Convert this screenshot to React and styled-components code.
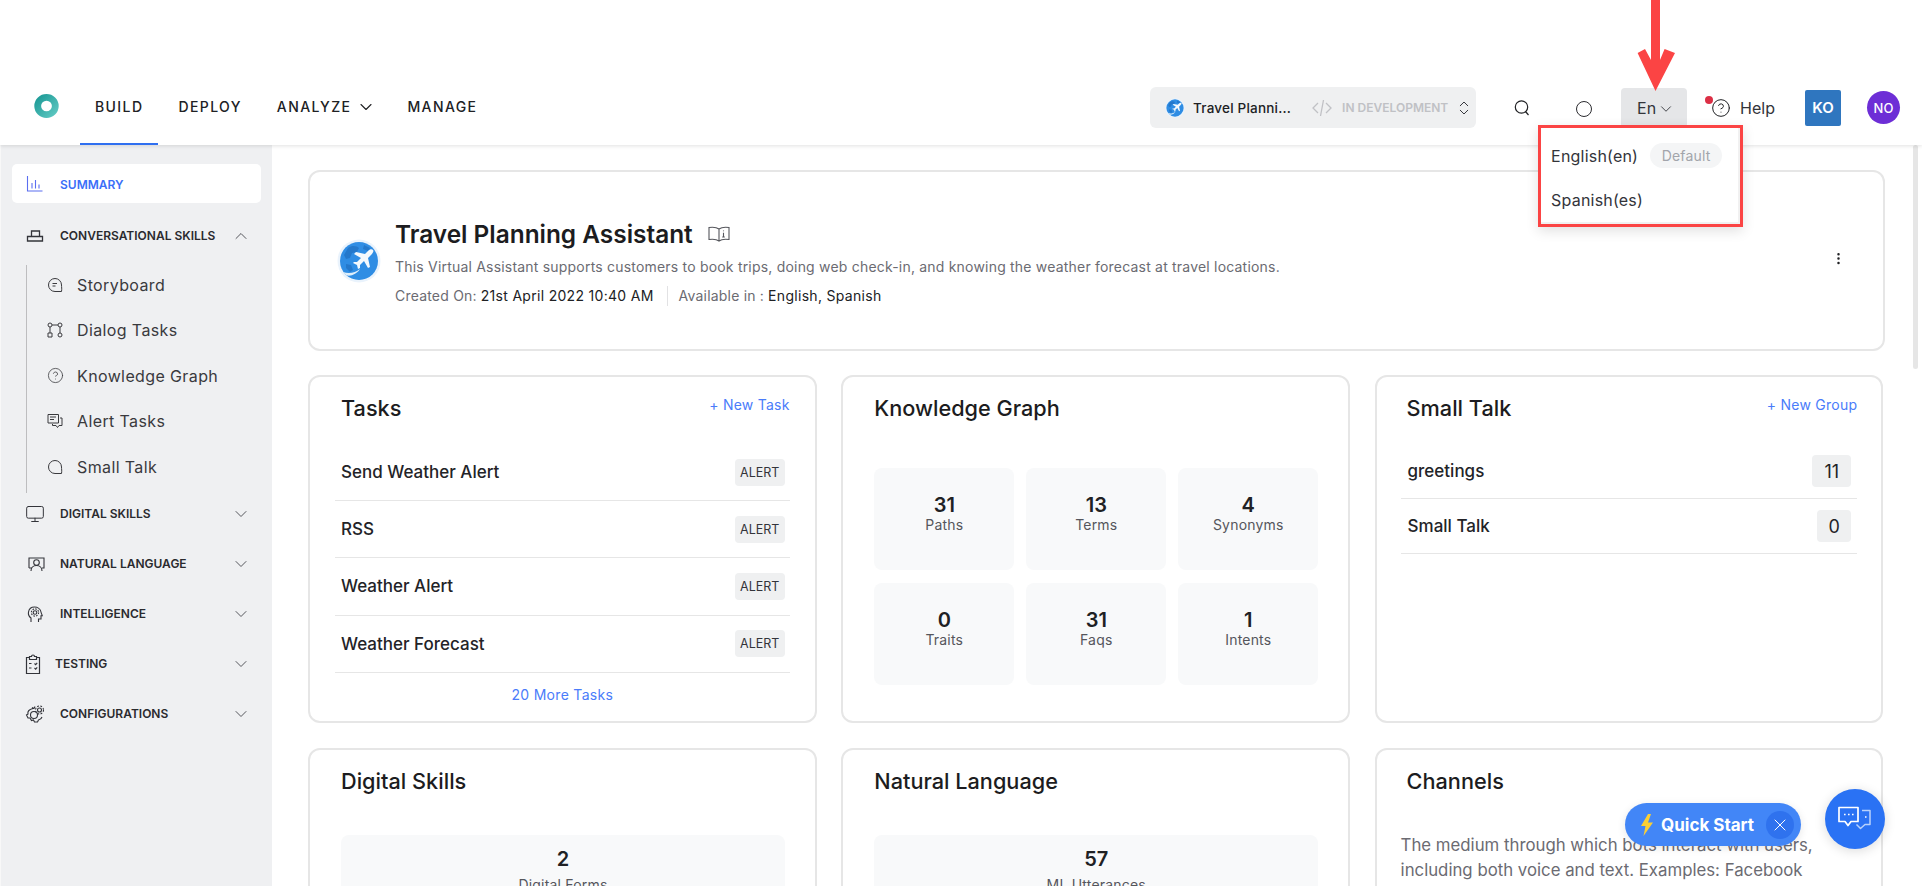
import React from 'react'
import styled, { createGlobalStyle } from 'styled-components'
import { ChevronDown, ChevronUp, ChevronsUpDown, CircleHelp, EllipsisVertical, Monitor, X } from 'lucide-react'

const GlobalStyle = createGlobalStyle`
  html, body {
    margin: 0;
    padding: 0;
    background: #fff;
    font-family: 'Inter', 'Liberation Sans', sans-serif;
    color: #202124;
  }
  * { box-sizing: border-box; }
`

const Page = styled.div`
  position: relative;
  height: 100vh;
  overflow: hidden;
  display: flex;
  flex-direction: column;
`

const Header = styled.header`
  position: relative;
  z-index: 3;
  flex: none;
  height: 145px;
  padding: 70px 22px 0 34px;
  display: flex;
  align-items: center;
  background: #fff;
  box-shadow: 0 1px 4px rgba(0, 0, 0, 0.12);
`

const LogoWrap = styled.div`
  width: 25px;
  height: 24px;
  margin: -3px 21px 0 0;
`

const Nav = styled.nav`
  display: flex;
  height: 75px;
  gap: 5px;
`

const NavItem = styled.a`
  display: flex;
  align-items: center;
  gap: 5px;
  padding: 0 15px;
  font-size: 14px;
  font-weight: 500;
  letter-spacing: 1.4px;
  color: #202124;
  border-bottom: 2px solid ${(p) => (p.$active ? '#2f6ff0' : 'transparent')};
`

const NavChevron = styled(ChevronDown)`
  margin-right: -4px;
`

const RightGroup = styled.div`
  margin-left: auto;
  display: flex;
  align-items: center;
`

const AppPicker = styled.div`
  width: 326px;
  height: 41px;
  border-radius: 6px;
  background: #eff0f1;
  display: flex;
  align-items: center;
  padding-left: 15px;
`

const AppName = styled.span`
  margin-left: 8px;
  width: 119px;
  font-size: 13.5px;
  font-weight: 500;
  letter-spacing: 0.2px;
  color: #202124;
  white-space: nowrap;
`

const DevStatus = styled.span`
  margin-left: 10px;
  margin-right: 7px;
  font-size: 12px;
  font-weight: 600;
  color: #c0c1c5;
  white-space: nowrap;
`

const HeaderIcon = styled.span`
  display: inline-flex;
  margin-left: ${(p) => p.$ml}px;
`

const EmptyCircle = styled.span`
  display: block;
  width: 16px;
  height: 16px;
  margin: 2px 0 0 46px;
  border: 1px solid #2c2c30;
  border-radius: 50%;
`

const LangWrap = styled.div`
  position: relative;
  margin-left: 29px;
`

const LangButton = styled.div`
  width: 66px;
  height: 40px;
  border-radius: 4px;
  background: #e5e6e8;
  display: flex;
  align-items: center;
  padding-left: 16px;
  gap: 1px;
  font-size: 16px;
  color: #33343a;
`

const LangMenu = styled.div`
  position: absolute;
  top: 37px;
  left: -83px;
  width: 205px;
  height: 102px;
  border: 3px solid #fb4444;
  background: #fff;
  padding: 6px 0 0 10px;
  box-shadow: 0 4px 12px rgba(0, 0, 0, 0.12), inset -2px -2px 0 #f1f1f1;
`

const LangOption = styled.div`
  height: 44px;
  display: flex;
  align-items: center;
  font-size: 16px;
  letter-spacing: 0.2px;
  color: #33343a;
`

const DefaultTag = styled.span`
  margin-left: 12px;
  width: 72px;
  height: 25px;
  border-radius: 13px;
  background: #f4f5f6;
  color: #a2a5ab;
  font-size: 14px;
  display: flex;
  align-items: center;
  justify-content: center;
`

const HelpWrap = styled.div`
  position: relative;
  margin-left: 24px;
  display: flex;
  align-items: center;
  gap: 9px;
  font-size: 16px;
  color: #33343a;
`

const HelpDot = styled.span`
  position: absolute;
  top: -2px;
  left: -6px;
  width: 8px;
  height: 8px;
  border-radius: 50%;
  background: #dc2f45;
`

const KoBadge = styled.div`
  margin-left: 30px;
  width: 36px;
  height: 36px;
  border-radius: 2px;
  background: #2f76bf;
  color: #fff;
  font-size: 15px;
  font-weight: 600;
  display: flex;
  align-items: center;
  justify-content: center;
`

const NoBadge = styled.div`
  margin-left: 26px;
  width: 33px;
  height: 33px;
  border-radius: 50%;
  background: #6d2ed6;
  color: #fff;
  font-size: 13px;
  font-weight: 500;
  display: flex;
  align-items: center;
  justify-content: center;
`

const ArrowMark = styled.svg`
  position: absolute;
  z-index: 5;
  top: 0;
  left: 1636px;
`

const Body = styled.div`
  flex: 1;
  min-height: 0;
  display: flex;
`

const Sidebar = styled.aside`
  flex: none;
  width: 272px;
  border-left: 1px solid #f8f8f8;
  background: #eff0f2;
  padding: 19px 11px 0 11px;
  display: flex;
  flex-direction: column;
  gap: 10px;
`

const SummaryRow = styled.div`
  height: 39px;
  margin-bottom: 2px;
  padding: 1px 0 0 13px;
  border-radius: 5px;
  background: #fff;
  display: flex;
  align-items: center;
  gap: 13px;
  font-size: 12px;
  font-weight: 600;
  color: #3b6ef8;
`

const SectionRow = styled.div`
  flex: none;
  height: 40px;
  padding: 1px 10px 0 13px;
  display: flex;
  align-items: center;
  gap: ${(p) => p.$gap || 13}px;
  font-size: 12px;
  font-weight: 600;
  color: #2a2a2e;
`

const SectionChevron = styled.span`
  display: inline-flex;
  margin-left: auto;
  color: #55565c;
`

const SubList = styled.div`
  flex: none;
  height: 228px;
  margin: 0 0 -10px 14px;
  border-left: 1px solid #bdbdbf;
  & > :first-child { margin-top: -3px; }
`

const SubRow = styled.div`
  height: 45.5px;
  padding-left: 20px;
  display: flex;
  align-items: center;
  gap: 14px;
  font-size: 16px;
  letter-spacing: 0.38px;
  color: #3a3a3e;
`

const Main = styled.main`
  position: relative;
  flex: 1;
  min-width: 0;
  overflow: hidden;
  padding: 25px 37px 0 36px;
`

const ScrollThumb = styled.div`
  position: absolute;
  top: 0;
  right: 4px;
  width: 5px;
  height: 224px;
  border-radius: 3px;
  background: #e6e6e6;
`

const HeroCard = styled.section`
  height: 181px;
  margin-bottom: 24px;
  border: 2px solid #e6e6e6;
  border-radius: 12px;
  padding: 0 37px 0 27px;
  display: flex;
  align-items: center;
`

const HeroText = styled.div`
  margin-left: 14px;
  margin-top: 5px;
`

const HeroTitle = styled.h1`
  margin: 0;
  display: flex;
  align-items: center;
  gap: 15px;
  font-size: 24.4px;
  line-height: 28px;
  font-weight: 600;
  color: #1c1c20;
`

const HeroDesc = styled.p`
  margin: 9px 0 0;
  font-size: 14px;
  line-height: 20px;
  letter-spacing: 0.2px;
  color: #6b6b72;
`

const HeroMeta = styled.div`
  margin-top: 9px;
  display: flex;
  align-items: center;
  font-size: 14px;
  line-height: 20px;
  letter-spacing: 0.2px;
  color: #6b6b72;
`

const Strong = styled.span`
  color: #202124;
  margin-left: 4px;
  letter-spacing: 0.3px;
`

const MetaDivider = styled.span`
  width: 1px;
  height: 20px;
  margin: 0 11px 0 13px;
  background: #e2e2e4;
`

const HeroMenu = styled.span`
  margin-left: auto;
  margin-top: -4px;
  display: inline-flex;
  color: #202124;
`

const CardGrid = styled.div`
  display: grid;
  grid-template-columns: repeat(3, 508.7px);
  gap: 25px 24.6px;
`

const Card = styled.section`
  height: 348px;
  border: 2px solid #e6e6e6;
  border-radius: 12px;
  padding: 0 ${(p) => p.$pad}px;
  display: flex;
  flex-direction: column;
`

const CardHead = styled.div`
  flex: none;
  height: 67px;
  padding: 18px 0 0 ${(p) => p.$inset || 0}px;
  display: flex;
  justify-content: space-between;
  align-items: flex-start;
`

const CardTitle = styled.h2`
  margin: 0;
  font-size: 21.7px;
  line-height: 26px;
  font-weight: 500;
  color: #1c1c20;
`

const CardLink = styled.a`
  font-size: 14px;
  line-height: 20px;
  letter-spacing: 0.25px;
  color: #4a7cfa;
`

const ListRow = styled.div`
  flex: none;
  height: ${(p) => p.$h}px;
  padding: 0 ${(p) => p.$endPad}px 0 ${(p) => p.$inset}px;
  border-bottom: 1px solid #e6e6e6;
  display: flex;
  align-items: center;
  justify-content: space-between;
  font-size: 17px;
  font-weight: 500;
  color: #232327;
`

const AlertTag = styled.span`
  width: 50px;
  height: 27px;
  border-radius: 4px;
  background: #eff0f1;
  font-size: 12.5px;
  font-weight: 400;
  color: #33343a;
  display: flex;
  align-items: center;
  justify-content: center;
`

const CountTag = styled.span`
  width: ${(p) => p.$w}px;
  height: 32px;
  border-radius: 4px;
  background: #eff0f1;
  font-size: 18px;
  font-weight: 400;
  display: flex;
  align-items: center;
  justify-content: center;
`

const MoreLink = styled.a`
  flex: 1;
  display: flex;
  align-items: center;
  justify-content: center;
  padding-bottom: 4px;
  font-size: 14px;
  letter-spacing: 0.3px;
  color: #4a7cfa;
`

const TileGrid = styled.div`
  margin-top: ${(p) => p.$top}px;
  display: grid;
  grid-template-columns: repeat(${(p) => p.$cols}, 1fr);
  gap: 13px 12px;
  width: ${(p) => p.$width}px;
  margin-left: ${(p) => p.$left || 0}px;
`

const Tile = styled.div`
  height: 102px;
  border-radius: 8px;
  background: #f8f9fa;
  padding-top: ${(p) => p.$top}px;
  text-align: center;
`

const TileNumber = styled.div`
  font-size: 20px;
  line-height: 24px;
  font-weight: 600;
  color: #202124;
`

const TileLabel = styled.div`
  margin-top: ${(p) => p.$gap}px;
  font-size: 14px;
  line-height: 18px;
  letter-spacing: 0.2px;
  color: #55565c;
`

const ChannelsText = styled.p`
  margin: 16px 0 0;
  font-size: 16.8px;
  line-height: 25px;
  color: #6b6b72;
`

const QuickStart = styled.div`
  position: absolute;
  z-index: 4;
  left: 1625px;
  top: 803px;
  width: 176px;
  height: 43px;
  border-radius: 22px;
  background: #4286f7;
  box-shadow: 0 2px 8px rgba(0, 0, 0, 0.1);
  padding-left: 15px;
  display: flex;
  align-items: center;
  gap: 7px;
  color: #fff;
  font-size: 17px;
  font-weight: 700;
`

const QuickClose = styled.span`
  margin-left: 5px;
  margin-top: 1px;
  width: 28px;
  height: 28px;
  border-radius: 50%;
  background: #2f72ee;
  display: flex;
  align-items: center;
  justify-content: center;
`

const ChatFab = styled.div`
  position: absolute;
  z-index: 4;
  left: 1825px;
  top: 789px;
  width: 60px;
  height: 60px;
  border-radius: 50%;
  background: #2a72f4;
  box-shadow: 0 2px 12px rgba(0, 0, 0, 0.14);
  display: flex;
  align-items: center;
  justify-content: center;
`

const Logo = () => (
  <svg width="25" height="24" viewBox="0 0 25 24">
    <defs>
      <linearGradient id="logoRing" x1="0" y1="0" x2="1" y2="1">
        <stop offset="0" stopColor="#1f9c98" />
        <stop offset="1" stopColor="#5cc6c0" />
      </linearGradient>
    </defs>
    <ellipse cx="12.5" cy="12" rx="8.8" ry="8.6" fill="none" stroke="url(#logoRing)" strokeWidth="6.8" />
  </svg>
)

const Globe = ({ size }) => (
  <svg width={size} height={size} viewBox="0 0 44 44">
    <circle cx="22" cy="22" r="21.5" fill="#eaf3fc" />
    <circle cx="22" cy="22" r="19" fill="#2f8de4" />
    <path d="M11 9c4-3 9-2 11 0l-2 4-5 1-2 5-4 1-2-4zM27 6l6 3-2 3-5-2zM9 25l5 1 2 5-3 2-4-4z" fill="#2478cb" />
    <path d="M6 33c6 2 12 1 17-3-3 5-10 8-14 6z" fill="#dfeefa" />
    <path d="M36 11c1 1 0 3-2 5l-3 3 2 9-2 1-4-7-4 4v3l-2 1-1-4-4-2 1-1 3 0 4-4-7-4 2-2 9 2 3-3c2-2 4-2 5-1z" fill="#f4f9fd" />
  </svg>
)

const CodeIcon = () => (
  <svg width="20" height="20" viewBox="0 0 20 20" fill="none" stroke="#c0c1c5" strokeWidth="1.3">
    <path d="M6 5 1 10l5 5M14 5l5 5-5 5M11.5 2 8.5 18" />
  </svg>
)

const SearchIcon = () => (
  <svg width="16" height="16" viewBox="0 0 16 16" fill="none" stroke="#202124" strokeWidth="1.2">
    <circle cx="7.5" cy="7" r="6.2" />
    <path d="m11.5 11.5 3 3.5" />
  </svg>
)

const BookIcon = () => (
  <svg width="22" height="16" viewBox="0 0 22 16" fill="none" stroke="#55565c" strokeWidth="1.1">
    <path d="M11 3C9 1.5 5 1 1 1.5v12c4-.5 8 0 10 1.500 2-1.500 6-2 10-1.500v-12C17 1 13 1.500 11 3zM11 3v12" />
    <path d="M15.500 4.500v.8M15.500 6.800v4M14.200 11h2.600" />
  </svg>
)

const ArrowDown = () => (
  <ArrowMark width="40" height="92" viewBox="0 0 40 92">
    <path d="M15 0h9v60l4.600-11 10.400 4L19.500 91 1.600 53 9 49l6 11z" fill="#fb4444" />
  </ArrowMark>
)

const Bolt = () => (
  <svg width="14" height="22" viewBox="0 0 14 22">
    <path d="M8 0 1 12h4.500L3.500 22 13 8.500H8L11 0z" fill="#fbcf33" />
  </svg>
)

const ChatIcon = () => (
  <svg width="34" height="28" viewBox="0 0 34 28" fill="none" strokeLinejoin="round">
    <path d="M1 2.500h19v14h-7l-3 4-3-4H1z" stroke="#fff" strokeWidth="1.700" />
    <path d="M6 9.500h1.600M10 9.500h1.600M14 9.500h1.600" stroke="#fff" strokeWidth="1.700" />
    <path d="M24 5.500h8v14h-5l-4.500 4-4-4" stroke="#b9d2fb" strokeWidth="1.500" />
    <path d="M27 12h1.500" stroke="#fff" strokeWidth="1.700" />
  </svg>
)

const SlotIcon = ({ children, stroke = '#33343a' }) => (
  <svg width="22" height="22" viewBox="0 0 22 22" fill="none" stroke={stroke} strokeWidth="1.1" style={{ flex: 'none' }}>
    {children}
  </svg>
)

const SubIcon = ({ children }) => (
  <svg width="16" height="16" viewBox="0 0 16 16" fill="none" stroke="#3a3a3e" strokeWidth="1" style={{ flex: 'none' }}>
    {children}
  </svg>
)

const SummaryIcon = () => (
  <SlotIcon stroke="#5b6ef0">
    <path d="M2.500 3v15h15M7 10v5.500M10.500 7v8.500M14 11.500v4" />
  </SlotIcon>
)

const SkillsIcon = () => (
  <SlotIcon>
    <path d="M6.500 6h8v5.500h-8zM2.500 11.500h15v4.500h-15z" strokeWidth="1.300" />
  </SlotIcon>
)

const NaturalIcon = () => (
  <SlotIcon>
    <path d="M4 15V5h15v10h-2M7 15H4" />
    <circle cx="11.500" cy="9.500" r="2.800" />
    <path d="M6 18c0-3 2-5.500 5.500-5.500S17 15 17 18" />
  </SlotIcon>
)

const IntelligenceIcon = () => (
  <SlotIcon>
    <path d="M6 19v-4c-2-1.500-3-3.500-2.500-6 .5-3 3-5 6-5s6 2 6.500 5c.3 1.500 1 2.500 1.300 3.800h-1.300v3.200h-2.500v3" />
    <circle cx="10" cy="9.500" r="1.800" />
    <circle cx="10" cy="9.500" r="3.600" strokeDasharray="1.600 1.200" />
  </SlotIcon>
)

const TestingIcon = () => (
  <SlotIcon>
    <path d="M4.500 4.500H1.500v16h13v-16h-3M4.500 3.500h2c0-2 3-2 3 0h2v3h-7z" strokeWidth="1.200" />
    <path d="M4 10.500h2.500M4 15h2.500M9.500 10.500l1.200 1.200 1.500-1.800M9.500 15l1.200 1.200 1.500-1.800" />
  </SlotIcon>
)

const ConfigIcon = () => (
  <SlotIcon>
    <path d="M7 4.500 9 5.500 10 3.500M8 5.500C4 6.500 2.500 9 3 11l-1.500 1 1.500 3 2 0 1.500 2.500 2-.5 1 2h3l1-2c2-.5 3-1.500 3.500-3" />
    <circle cx="9" cy="12" r="3.500" />
    <circle cx="14.500" cy="7" r="2" />
    <circle cx="14.500" cy="7" r="4" strokeDasharray="1.800 1.400" />
  </SlotIcon>
)

const StoryboardIcon = () => (
  <SubIcon>
    <path d="M14.500 14.500H8a6.500 6.500 0 1 1 6.500-6.500c0 2 .5 4 0 6.500z" />
    <path d="M5.500 6.500h4.500M5.500 9h3" />
  </SubIcon>
)

const DialogIcon = () => (
  <SubIcon>
    <circle cx="3" cy="3" r="2" />
    <circle cx="13" cy="3" r="2" />
    <circle cx="13" cy="13" r="2" />
    <path d="M1 11h4v4H1zM5 3h6M3 5v6M13 5v6" />
  </SubIcon>
)

const AlertIcon = () => (
  <SubIcon>
    <path d="M1 1.500h10.500v8.500H1z" />
    <path d="M3 4h6M3 6.500h4" />
    <path d="M13 5h2v7.500h-3l-1.500 2-1.500-2H5.500V11" />
  </SubIcon>
)

const TalkIcon = () => (
  <SubIcon>
    <path d="M14.500 14.500H8a6.500 6.500 0 1 1 6.500-6.500c0 2 .5 4 0 6.500z" />
  </SubIcon>
)

const subItems = [
  { label: 'Storyboard', Icon: StoryboardIcon },
  { label: 'Dialog Tasks', Icon: DialogIcon },
  { label: 'Knowledge Graph', Icon: () => <CircleHelp size={17} strokeWidth={1.1} color="#3a3a3e" style={{ marginRight: -1 }} /> },
  { label: 'Alert Tasks', Icon: AlertIcon },
  { label: 'Small Talk', Icon: TalkIcon },
]

const lowerSections = [
  { label: 'DIGITAL SKILLS', icon: <Monitor size={20} strokeWidth={1.2} color="#33343a" style={{ flex: 'none', marginRight: 2 }} /> },
  { label: 'NATURAL LANGUAGE', icon: <NaturalIcon /> },
  { label: 'INTELLIGENCE', icon: <IntelligenceIcon /> },
  { label: 'TESTING', icon: <TestingIcon />, gap: 8 },
  { label: 'CONFIGURATIONS', icon: <ConfigIcon /> },
]

const tasks = ['Send Weather Alert', 'RSS', 'Weather Alert', 'Weather Forecast']

const graphStats = [
  ['31', 'Paths'],
  ['13', 'Terms'],
  ['4', 'Synonyms'],
  ['0', 'Traits'],
  ['31', 'Faqs'],
  ['1', 'Intents'],
]

export default function App() {
  return (
    <Page>
      <GlobalStyle />
      <ArrowDown />

      <Header>
        <LogoWrap>
          <Logo />
        </LogoWrap>
        <Nav>
          <NavItem $active>BUILD</NavItem>
          <NavItem>DEPLOY</NavItem>
          <NavItem>
            ANALYZE <NavChevron size={20} strokeWidth={1.3} />
          </NavItem>
          <NavItem>MANAGE</NavItem>
        </Nav>

        <RightGroup>
          <AppPicker>
            <Globe size={20} />
            <AppName>Travel Planni...</AppName>
            <CodeIcon />
            <DevStatus>IN DEVELOPMENT</DevStatus>
            <ChevronsUpDown size={18} strokeWidth={1.3} color="#33343a" />
          </AppPicker>
          <HeaderIcon $ml={38}>
            <SearchIcon />
          </HeaderIcon>
          <EmptyCircle />
          <LangWrap>
            <LangButton>
              En <ChevronDown size={18} strokeWidth={1.2} style={{ marginTop: 3 }} />
            </LangButton>
            <LangMenu>
              <LangOption>
                English(en)<DefaultTag>Default</DefaultTag>
              </LangOption>
              <LangOption>Spanish(es)</LangOption>
            </LangMenu>
          </LangWrap>
          <HelpWrap>
            <HelpDot />
            <CircleHelp size={20} strokeWidth={1.2} color="#202124" />
            Help
          </HelpWrap>
          <KoBadge>KO</KoBadge>
          <NoBadge>NO</NoBadge>
        </RightGroup>
      </Header>

      <Body>
        <Sidebar>
          <SummaryRow>
            <SummaryIcon />
            SUMMARY
          </SummaryRow>
          <SectionRow>
            <SkillsIcon />
            CONVERSATIONAL SKILLS
            <SectionChevron>
              <ChevronUp size={20} strokeWidth={1.2} />
            </SectionChevron>
          </SectionRow>
          <SubList>
            {subItems.map(({ label, Icon }) => (
              <SubRow key={label}>
                <Icon />
                {label}
              </SubRow>
            ))}
          </SubList>
          {lowerSections.map((s) => (
            <SectionRow key={s.label} $gap={s.gap}>
              {s.icon}
              {s.label}
              <SectionChevron>
                <ChevronDown size={20} strokeWidth={1.2} />
              </SectionChevron>
            </SectionRow>
          ))}
        </Sidebar>

        <Main>
          <ScrollThumb />
          <HeroCard>
            <Globe size={44} />
            <HeroText>
              <HeroTitle>
                Travel Planning Assistant <BookIcon />
              </HeroTitle>
              <HeroDesc>
                This Virtual Assistant supports customers to book trips, doing web check-in, and knowing the weather
                forecast at travel locations.
              </HeroDesc>
              <HeroMeta>
                Created On:<Strong>21st April 2022 10:40 AM</Strong>
                <MetaDivider />
                Available in :<Strong>English, Spanish</Strong>
              </HeroMeta>
            </HeroText>
            <HeroMenu>
              <EllipsisVertical size={15} strokeWidth={2} />
            </HeroMenu>
          </HeroCard>

          <CardGrid>
            <Card $pad={25}>
              <CardHead $inset={6}>
                <CardTitle>Tasks</CardTitle>
                <CardLink>+ New Task</CardLink>
              </CardHead>
              {tasks.map((t) => (
                <ListRow key={t} $h={57.2} $inset={6} $endPad={5}>
                  {t}
                  <AlertTag>ALERT</AlertTag>
                </ListRow>
              ))}
              <MoreLink>20 More Tasks</MoreLink>
            </Card>

            <Card $pad={31}>
              <CardHead>
                <CardTitle>Knowledge Graph</CardTitle>
              </CardHead>
              <TileGrid $top={24} $cols={3} $width={444}>
                {graphStats.map(([n, label]) => (
                  <Tile key={label} $top={25}>
                    <TileNumber>{n}</TileNumber>
                    <TileLabel $gap={-1}>{label}</TileLabel>
                  </Tile>
                ))}
              </TileGrid>
            </Card>

            <Card $pad={24}>
              <CardHead $inset={6}>
                <CardTitle>Small Talk</CardTitle>
                <CardLink>+ New Group</CardLink>
              </CardHead>
              <ListRow $h={55} $inset={7} $endPad={6}>
                greetings
                <CountTag $w={39}>11</CountTag>
              </ListRow>
              <ListRow $h={55} $inset={7} $endPad={6}>
                Small Talk
                <CountTag $w={34}>0</CountTag>
              </ListRow>
            </Card>

            <Card $pad={25}>
              <CardHead $inset={6}>
                <CardTitle>Digital Skills</CardTitle>
              </CardHead>
              <TileGrid $top={18} $cols={1} $width={444} $left={6}>
                <Tile $top={12}>
                  <TileNumber>2</TileNumber>
                  <TileLabel $gap={5}>Digital Forms</TileLabel>
                </Tile>
              </TileGrid>
            </Card>

            <Card $pad={31}>
              <CardHead>
                <CardTitle>Natural Language</CardTitle>
              </CardHead>
              <TileGrid $top={18} $cols={1} $width={444}>
                <Tile $top={12}>
                  <TileNumber>57</TileNumber>
                  <TileLabel $gap={5}>ML Utterances</TileLabel>
                </Tile>
              </TileGrid>
            </Card>

            <Card $pad={24}>
              <CardHead $inset={6}>
                <CardTitle>Channels</CardTitle>
              </CardHead>
              <ChannelsText>
                The medium through which bots interact with users, including both voice and text. Examples: Facebook
                Messenger, Slack, and more.
              </ChannelsText>
            </Card>
          </CardGrid>
        </Main>
      </Body>

      <QuickStart>
        <Bolt />
        Quick Start
        <QuickClose>
          <X size={20} strokeWidth={1.2} color="#fff" />
        </QuickClose>
      </QuickStart>
      <ChatFab>
        <ChatIcon />
      </ChatFab>
    </Page>
  )
}
